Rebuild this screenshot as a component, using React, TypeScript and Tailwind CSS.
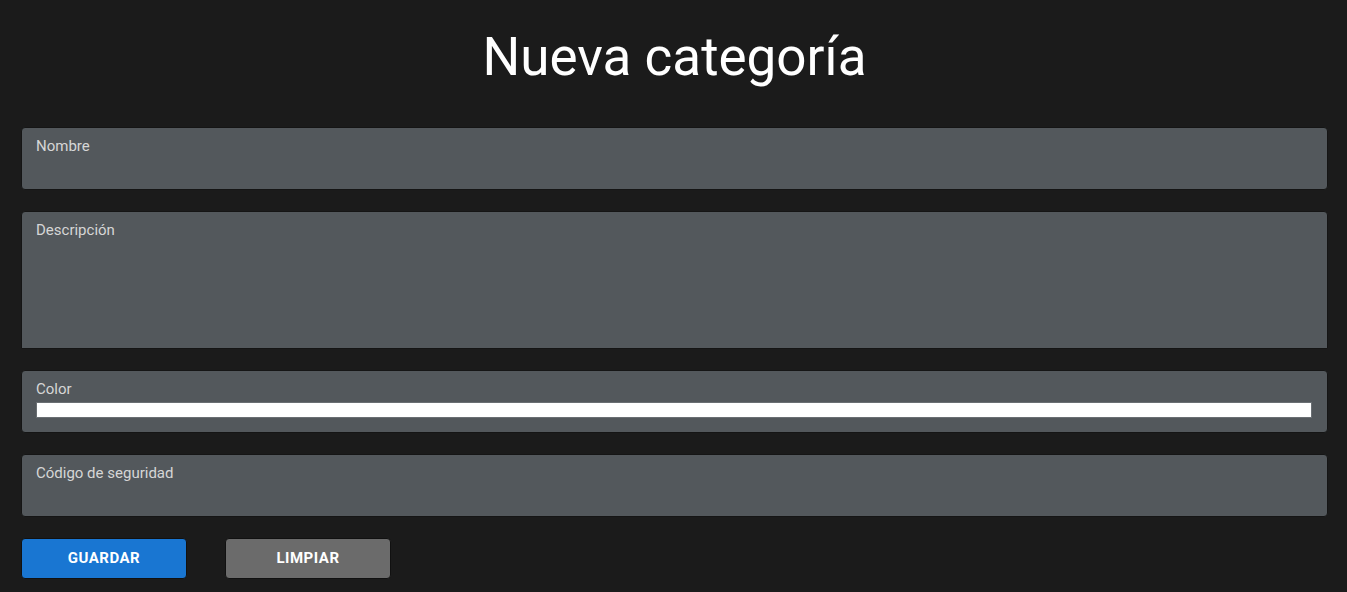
import React from "react";

const Field = ({ label, children, className = "" }: { label: string; children?: React.ReactNode; className?: string }) => (
  <div className={`bg-[#53585c] border border-[#151515] px-[13px] pt-[9px] ${className}`}>
    <div className="text-[15px] leading-[19px] text-[#d6d6d6] ml-[1px]">{label}</div>
    {children}
  </div>
);

export default function App() {
  return (
    <div className="min-h-[592px] bg-[#1b1b1b] font-['Roboto',sans-serif] px-[21px] pr-[19px] pt-[24px]">
      <h1 className="text-center text-white text-[53px] leading-[66px] font-normal">Nueva categoría</h1>
      <div className="mt-[37px] flex flex-col gap-[21px]">
        <Field label="Nombre" className="h-[63px] rounded-[4px]" />
        <Field label="Descripción" className="h-[138px] rounded-t-[4px]" />
        <Field label="Color" className="h-[63px] rounded-[4px]">
          <div className="mt-[3px] ml-[1px] mr-[2px] h-[16px] bg-white border border-[#6a6f73]" />
        </Field>
        <Field label="Código de seguridad" className="h-[63px] rounded-[4px]" />
      </div>
      <div className="mt-[21px] flex gap-[38px]">
        <button className="w-[166px] h-[41px] rounded-[4px] bg-[#1976d2] border border-[#111] text-white text-[15px] font-bold tracking-[0.5px]">GUARDAR</button>
        <button className="w-[166px] h-[41px] rounded-[4px] bg-[#6b6b6b] border border-[#111] text-white text-[15px] font-bold tracking-[0.5px]">LIMPIAR</button>
      </div>
    </div>
  );
}
